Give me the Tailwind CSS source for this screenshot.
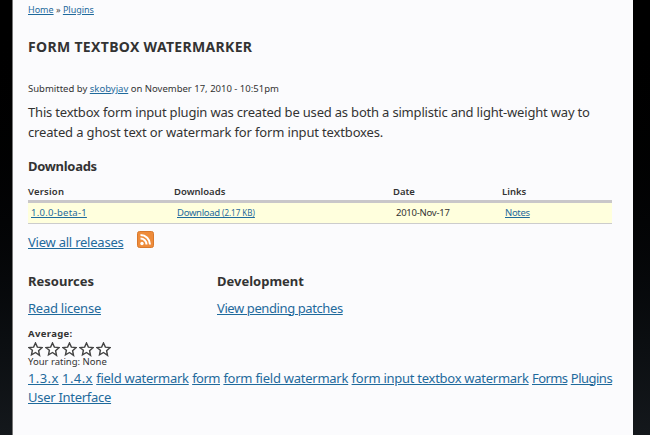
<!DOCTYPE html>
<html lang="en">
<head>
    <meta charset="UTF-8">
    <title>Form Textbox Watermarker</title>
    <script src="https://cdn.jsdelivr.net/npm/@tailwindcss/browser@4"></script>
</head>
<body class="bg-gradient-to-b from-black to-[#14181c] h-[435px] overflow-hidden font-['Noto_Sans',sans-serif] text-[#333]">
    <div class="ml-[12px] w-[621px] h-[435px] bg-[#fbfbfd] border-l border-[#777] pl-[15px] pr-[21px] overflow-hidden">
        <div class="h-[20px] pt-[3px] text-[9px] leading-[14px] text-[#444]">
            <a class="text-[#1f6a9c] underline">Home</a> » <a class="text-[#1f6a9c] underline">Plugins</a>
        </div>
        <h1 class="mt-[18px] text-[14px] leading-[18px] font-bold uppercase tracking-[0.33px] text-[#333]">Form Textbox Watermarker</h1>
        <p class="mt-[26px] text-[9.5px] leading-[14px] text-[#333]">Submitted by <a class="text-[#1f6a9c] underline">skobyjav</a> on November 17, 2010 - 10:51pm</p>
        <p class="mt-[6px] text-[13px] leading-[20px] tracking-[-0.19px] text-[#333]">This textbox form input plugin was created be used as both a simplistic and light-weight way to<br><span class="tracking-[-0.15px]">created a ghost text or watermark for form input textboxes.</span></p>

        <h2 class="mt-[15px] text-[13px] leading-[18px] font-bold tracking-[-0.3px] text-[#333]">Downloads</h2>
        <table class="mt-[9px] w-[584px] table-fixed text-[9.5px] text-[#333]">
            <thead>
                <tr class="border-b-[3px] border-[#c9c7c9] h-[17px] text-left">
                    <th class="w-[146px] font-semibold tracking-[0.2px]">Version</th>
                    <th class="w-[219px] font-semibold">Downloads</th>
                    <th class="w-[109px] font-semibold">Date</th>
                    <th class="font-semibold">Links</th>
                </tr>
            </thead>
            <tbody>
                <tr class="bg-[#ffffdd] border-b border-[#ccc] h-[22px]">
                    <td class="pl-[3px] pt-[2px]"><a class="text-[#1f6a9c] underline tracking-[0.25px]">1.0.0-beta-1</a></td>
                    <td class="pl-[3px] pt-[2px]"><a class="text-[#1f6a9c] underline tracking-[-0.3px]">Download <small class="text-[8px] tracking-[0px]">(2.17 KB)</small></a></td>
                    <td class="pl-[3px] pt-[2px] tracking-[-0.25px]">2010-Nov-17</td>
                    <td class="pl-[3px] pt-[2px]"><a class="text-[#1f6a9c] underline tracking-[-0.3px]">Notes</a></td>
                </tr>
            </tbody>
        </table>
        <div class="mt-[6px] flex h-[24px] items-start">
            <a class="text-[13px] leading-[22px] mt-[1px] tracking-[-0.23px] text-[#1f6a9c] underline">View all releases</a>
            <svg class="ml-[13px] mt-[1px]" width="17" height="17" viewBox="0 0 17 17">
                <rect x="0.5" y="0.5" width="16" height="16" rx="2" fill="#ee8b3a" stroke="#d9782c"/>
                <circle cx="5" cy="12.5" r="1.7" fill="#fff"/>
                <path d="M3.5 7.5a6 6 0 0 1 6 6M3.5 4a9.500 9.500 0 0 1 9.500 9.500" fill="none" stroke="#fff" stroke-width="2"/>
            </svg>
        </div>

        <div class="mt-[18px] flex">
            <div class="w-[189px]">
                <h2 class="text-[13px] leading-[18px] font-bold text-[#333]">Resources</h2>
                <a class="block mt-[9px] text-[13px] leading-[18px] tracking-[-0.25px] text-[#1f6a9c] underline">Read license</a>
            </div>
            <div>
                <h2 class="text-[13px] leading-[18px] font-bold text-[#333]">Development</h2>
                <a class="block mt-[9px] text-[13px] leading-[18px] tracking-[-0.4px] text-[#1f6a9c] underline">View pending patches</a>
            </div>
        </div>

        <div class="mt-[11px] text-[9.5px] leading-[12px] font-bold tracking-[0.35px] text-[#333]">Average:</div>
        <div class="mt-[2px] flex gap-[2px] h-[15px]">
            <svg width="15" height="15" viewBox="0 0 16 16"><path d="M8 1l2 4.500 5 .5-3.700 3.300 1 4.900L8 11.200l-4.300 2.500 1-4.900L1 6l5-.5z" fill="#fff" stroke="#444" stroke-width="1.500"/></svg>
            <svg width="15" height="15" viewBox="0 0 16 16"><path d="M8 1l2 4.500 5 .5-3.700 3.300 1 4.900L8 11.200l-4.300 2.500 1-4.900L1 6l5-.5z" fill="#fff" stroke="#444" stroke-width="1.500"/></svg>
            <svg width="15" height="15" viewBox="0 0 16 16"><path d="M8 1l2 4.500 5 .5-3.700 3.300 1 4.900L8 11.200l-4.300 2.500 1-4.900L1 6l5-.5z" fill="#fff" stroke="#444" stroke-width="1.500"/></svg>
            <svg width="15" height="15" viewBox="0 0 16 16"><path d="M8 1l2 4.500 5 .5-3.700 3.300 1 4.900L8 11.200l-4.300 2.500 1-4.900L1 6l5-.5z" fill="#fff" stroke="#444" stroke-width="1.500"/></svg>
            <svg width="15" height="15" viewBox="0 0 16 16"><path d="M8 1l2 4.500 5 .5-3.700 3.300 1 4.900L8 11.200l-4.300 2.500 1-4.900L1 6l5-.5z" fill="#fff" stroke="#444" stroke-width="1.500"/></svg>
        </div>
        <div class="mt-[-1px] text-[9.5px] leading-[12px] text-[#333]">Your rating: None</div>
        <div class="mt-[1px] text-[13px] leading-[19px] whitespace-nowrap text-[#1f6a9c]">
            <a class="underline tracking-[0.4px]">1.3.x</a> <a class="underline tracking-[0.4px]">1.4.x</a> <a class="underline tracking-[-0.27px]">field watermark</a> <a class="underline tracking-[-0.5px]">form</a> <a class="underline tracking-[-0.25px]">form field watermark</a> <a class="underline tracking-[-0.27px]">form input textbox watermark</a> <a class="underline tracking-[-0.6px]">Forms</a> <a class="underline tracking-[-0.5px]">Plugins</a><br><a class="underline tracking-[-0.28px]">User Interface</a>
        </div>
    </div>
</body>
</html>
